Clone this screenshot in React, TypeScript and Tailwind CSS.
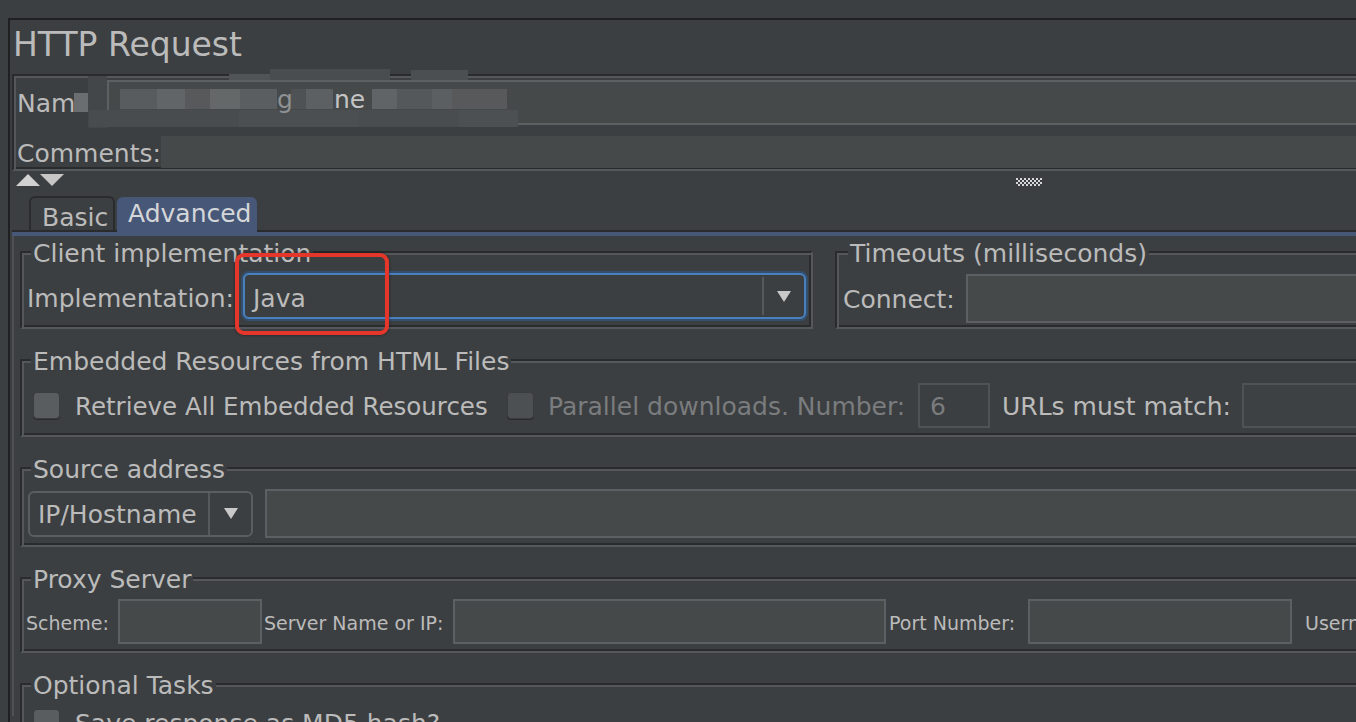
import React from "react";

const etched =
  "border-2 border-t-[#292b2d] border-l-[#292b2d] border-r-[#55585a] border-b-[#55585a] shadow-[inset_2px_2px_0_#55585a,inset_-2px_-2px_0_#292b2d]";
const legendCls =
  "px-[2px] pt-[4px] text-[25px] leading-[28px] bg-[#3c3f41] whitespace-nowrap";
const label = "text-[25px] leading-[28px] whitespace-nowrap";
const field = "bg-[#45494a] border-2 border-[#5d6062]";

const tiles: [number, number, number, number, string][] = [
  [74, 93, 14, 19, "#6b6e70"],
  [88, 76, 19, 52, "#444749"],
  [229, 74, 160, 6, "#515456"],
  [270, 69, 120, 11, "#4a4d4f"],
  [411, 70, 57, 10, "#4c4f51"],
  [120, 89, 37, 20, "#595c5e"],
  [157, 89, 28, 20, "#626567"],
  [185, 89, 25, 20, "#57595b"],
  [210, 89, 30, 20, "#656869"],
  [240, 89, 37, 20, "#5b5e60"],
  [291, 89, 15, 20, "#4f5254"],
  [306, 89, 27, 20, "#5d6062"],
  [372, 89, 25, 20, "#616466"],
  [397, 89, 35, 20, "#55585a"],
  [432, 89, 20, 20, "#5c5f61"],
  [452, 89, 55, 20, "#57595b"],
  [89, 110, 150, 17, "#494c4e"],
  [239, 110, 120, 17, "#4c4f51"],
  [359, 110, 100, 17, "#4a4d4f"],
  [459, 110, 59, 17, "#4d5052"],
];

function Checkbox({ disabled }: { disabled?: boolean }) {
  return (
    <div
      className={
        disabled
          ? "w-[27px] h-[27px] shrink-0 rounded-[4px] bg-[#4d5052] border border-[#3a3c3e] shadow-[0_1px_0_#2a2b2c]"
          : "w-[27px] h-[27px] shrink-0 rounded-[4px] bg-[#5a5d5f] border border-[#3a3c3e] shadow-[0_1px_0_#2a2b2c]"
      }
    />
  );
}

function DownArrow() {
  return (
    <svg width="14" height="11" viewBox="0 0 14 11">
      <polygon points="0,0 14,0 7,11" fill="#c9c9c9" />
    </svg>
  );
}

function Grip() {
  const rects: React.ReactElement[] = [];
  for (let r = 0; r < 4; r++) {
    for (let c = 0; c < 13; c++) {
      if ((r + c) % 2 === 0) {
        rects.push(<rect key={r + "-" + c} x={c * 2} y={r * 2} width="2" height="2" fill="#d6d6d6" />);
      }
    }
  }
  return (
    <svg width="26" height="8" viewBox="0 0 26 8">
      {rects}
    </svg>
  );
}

export default function App() {
  return (
    <div className="relative w-[1356px] h-[722px] overflow-hidden bg-[#3c3f41] text-[#bbbbbb] font-['DejaVu_Sans',sans-serif]">
      <div className="h-[18px]" />
      <div className="ml-[8px] border-t-2 border-l-2 border-[#1f2022] h-[704px]">
        {/* Title */}
        <div className="h-[54px] pl-[3px] text-[33px] leading-[50px] whitespace-nowrap">HTTP Request</div>

        {/* Name / Comments panel */}
        <div className={"ml-[2px] -mr-[20px] h-[97px] pt-[4px] " + etched}>
          <div className="flex h-[45px] items-center">
            <div className={"w-[93px] pl-[3px] pt-[2px] " + label}>Name:</div>
            <div className={"flex-1 h-[45px] border-r-0 " + field} />
          </div>
          <div className="mt-[11px] flex h-[32px] items-center">
            <div className={"w-[147px] pl-[3px] pt-[4px] " + label}>Comments:</div>
            <div className="flex-1 h-[32px] bg-[#45494a]" />
          </div>
        </div>

        {/* Splitter */}
        <div className="h-[24px] pl-[6px] pt-[3px] flex items-start">
          <svg width="48" height="12" viewBox="0 0 48 12">
            <polygon points="0,12 12,0 24,12" fill="#d2d2d2" />
            <polygon points="24,0 48,0 36,12" fill="#c6c6c6" />
          </svg>
          <div className="ml-[952px] mt-[4px]">
            <Grip />
          </div>
        </div>

        {/* Tabbed pane */}
        <div className="ml-[2px]">
          <div className="flex items-end h-[37px] pl-[17px] border-b-2 border-[#2a2b2d]">
            <div className="w-[86px] h-[34px] border-t-2 border-l-2 border-r-2 border-[#2a2b2d] rounded-t-[6px] pl-[11px] pt-[7px] text-[25px] leading-[26px]">
              Basic
            </div>
            <div className="relative ml-[2px] -mb-[2px] w-[140px] h-[35px] bg-[#475778] rounded-t-[6px] pl-[11px] pt-[4px] text-[25px] leading-[26px] text-[#d4d6d8]">
              Advanced
            </div>
          </div>
          <div className="h-[4px] bg-[#475778]" />

          <div className="border-l-2 border-[#4e5153] pl-[6px] h-[480px]">
            {/* Row 1 */}
            <div className="flex">
              <fieldset className={"w-[793px] shrink-0 min-w-0 pb-[8px] " + etched}>
                <legend className={"ml-[9px] " + legendCls}>Client implementation</legend>
                <div className="mt-[5px] flex items-center h-[46px] pl-[5px] pr-[5px]">
                  <div className={"w-[216px] shrink-0 pt-[6px] " + label}>Implementation:</div>
                  <div className="flex-1 h-[46px] flex items-stretch rounded-[6px] border-2 border-[#4a80bd] shadow-[0_0_0_2px_#33506f] bg-[#3c3f41]">
                    <div className={"flex-1 pl-[8px] pt-[5px] flex items-center " + label}>Java</div>
                    <div className="w-[2px] bg-[#56595b] my-[2px]" />
                    <div className="w-[40px] flex items-center justify-center">
                      <DownArrow />
                    </div>
                  </div>
                </div>
              </fieldset>
              <fieldset className={"ml-[22px] w-[700px] shrink-0 min-w-0 pb-[4px] " + etched}>
                <legend className={"ml-[11px] " + legendCls}>Timeouts (milliseconds)</legend>
                <div className="mt-[6px] flex items-center h-[49px] pl-[6px]">
                  <div className={"w-[123px] shrink-0 pt-[3px] " + label}>Connect:</div>
                  <div className={"flex-1 h-[49px] " + field} />
                </div>
              </fieldset>
            </div>

            {/* Embedded resources */}
            <fieldset className={"mt-[15px] w-[1400px] min-w-0 pb-[7px] " + etched}>
              <legend className={"ml-[9px] " + legendCls}>Embedded Resources from HTML Files</legend>
              <div className="mt-[7px] flex items-center h-[45px] pl-[11px]">
                <Checkbox />
                <div className="ml-[15px] w-[412px] shrink-0 pt-[3px] text-[24.5px] leading-[28px] whitespace-nowrap">
                  Retrieve All Embedded Resources
                </div>
                <div className="ml-[20px]">
                  <Checkbox disabled />
                </div>
                <div className={"ml-[14px] w-[359px] shrink-0 pt-[3px] text-[#7a7c7e] " + label}>Parallel downloads. Number:</div>
                <div className={"ml-[11px] w-[72px] h-[45px] shrink-0 border-2 border-[#505355] pl-[10px] pt-[3px] flex items-center text-[#7a7c7e] " + label}>
                  6
                </div>
                <div className={"ml-[12px] w-[228px] shrink-0 pt-[3px] " + label}>URLs must match:</div>
                <div className="ml-[12px] w-[300px] h-[45px] shrink-0 border-2 border-[#505355] bg-[#3e4143]" />
              </div>
            </fieldset>

            {/* Source address */}
            <fieldset className={"mt-[15px] w-[1400px] min-w-0 pb-[7px] " + etched}>
              <legend className={"ml-[9px] " + legendCls}>Source address</legend>
              <div className="mt-[5px] flex items-center h-[49px] pl-[6px]">
                <div className="w-[225px] h-[46px] shrink-0 flex items-stretch rounded-[6px] border-2 border-[#5b5e60] bg-[#3c3f41]">
                  <div className={"flex-1 pl-[8px] pt-[3px] flex items-center " + label}>IP/Hostname</div>
                  <div className="w-[2px] bg-[#56595b]" />
                  <div className="w-[41px] flex items-center justify-center">
                    <DownArrow />
                  </div>
                </div>
                <div className={"ml-[12px] flex-1 h-[49px] " + field} />
              </div>
            </fieldset>

            {/* Proxy */}
            <fieldset className={"mt-[15px] w-[1400px] min-w-0 pb-[7px] " + etched}>
              <legend className={"ml-[9px] " + legendCls}>Proxy Server</legend>
              <div className="mt-[5px] flex items-center h-[45px] pl-[4px] text-[19px] leading-[22px] whitespace-nowrap">
                <div className="w-[92px] shrink-0 pt-[3px]">Scheme:</div>
                <div className={"w-[144px] h-[45px] shrink-0 " + field} />
                <div className="ml-[2px] w-[189px] shrink-0 pt-[3px]">Server Name or IP:</div>
                <div className={"w-[433px] h-[45px] shrink-0 " + field} />
                <div className="ml-[3px] w-[139px] shrink-0 pt-[3px]">Port Number:</div>
                <div className={"w-[264px] h-[45px] shrink-0 " + field} />
                <div className="ml-[13px] shrink-0 pt-[3px]">Username:</div>
              </div>
            </fieldset>

            {/* Optional tasks */}
            <fieldset className={"mt-[15px] w-[1400px] min-w-0 pb-[7px] " + etched}>
              <legend className={"ml-[9px] " + legendCls}>Optional Tasks</legend>
              <div className="mt-[9px] flex items-center h-[27px] pl-[11px]">
                <Checkbox />
                <div className={"ml-[15px] pt-[3px] " + label}>Save response as MD5 hash?</div>
              </div>
            </fieldset>
          </div>
        </div>
      </div>

      {/* Blurred (redacted) name */}
      {tiles.map(([x, y, w, h, c], i) => (
        <div
          key={i}
          className="absolute"
          style={{ left: x, top: y, width: w, height: h, backgroundColor: c }}
        />
      ))}
      <div className="absolute left-[277px] top-[86px] text-[25px] leading-[28px] text-[#8f9294]">g</div>
      <div className="absolute left-[334px] top-[86px] text-[25px] leading-[28px] text-[#c4c4c4]">ne</div>

      {/* Red highlight */}
      <div className="absolute left-[235px] top-[253px] w-[154px] h-[82px] rounded-[9px] border-[4px] border-[#e5362b] shadow-[0_0_3px_rgba(0,0,0,0.5)]" />
    </div>
  );
}
